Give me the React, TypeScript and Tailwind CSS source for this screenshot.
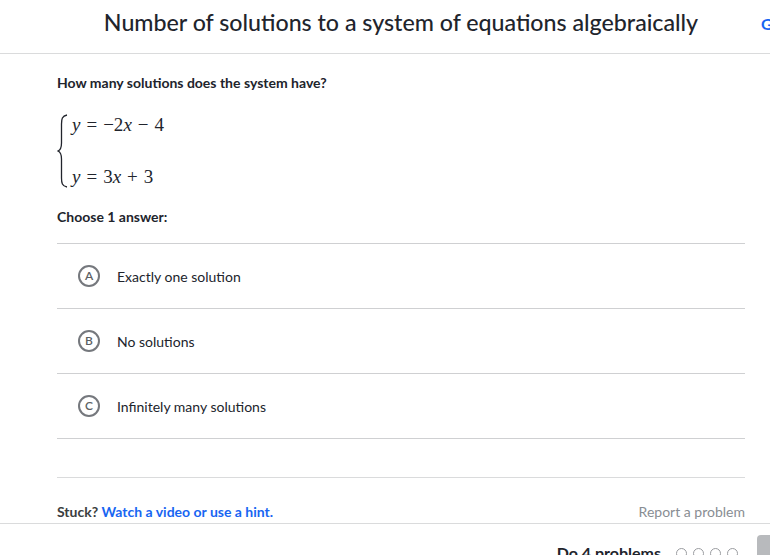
const lato = { fontFamily: 'Lato, "Noto Sans", sans-serif' }

const choices = [
  { letter: 'A', text: 'Exactly one solution' },
  { letter: 'B', text: 'No solutions' },
  { letter: 'C', text: 'Infinitely many solutions' },
]

function Brace() {
  return (
    <svg width="12" height="74" viewBox="0 0 12 74" className="shrink-0">
      <path
        d="M10 1 C5 2 4.5 5 4.5 10 L4.5 29 C4.5 34 3.5 36 1 37 C3.5 38 4.5 40 4.5 45 L4.5 64 C4.5 69 5 72 10 73"
        fill="none"
        stroke="#21242c"
        strokeWidth="1.3"
      />
    </svg>
  )
}

function Op({ children }: { children: React.ReactNode }) {
  return <span className="mx-[6px]">{children}</span>
}

function Letter({ letter }: { letter: string }) {
  return (
    <span className="relative flex h-[22px] w-[22px] shrink-0 items-center justify-center">
      <svg width="22" height="22" viewBox="0 0 22 22" className="absolute inset-0">
        <circle cx="11" cy="11" r="10" fill="none" stroke="#75787d" strokeWidth="2" />
      </svg>
      <span className="relative text-[12px] leading-none font-semibold text-[#5c5f63]">{letter}</span>
    </span>
  )
}

export default function App() {
  return (
    <div className="relative h-[555px] w-[770px] overflow-hidden bg-white text-[#21242c]" style={lato}>
      <header className="relative flex h-[54px] items-center justify-center border-b border-[#dadbdc] pl-[32px]">
        <h1 className="pb-[8px] text-[23.2px] font-medium">
          Number of solutions to a system of equations algebraically
        </h1>
        <span className="absolute left-[761px] top-[12px] text-[16px] font-bold text-[#1865f2]">G</span>
      </header>

      <main className="pl-[57px] pr-[25px] pt-[20px]">
        <p className="text-[14px] font-bold leading-[18px]">How many solutions does the system have?</p>

        <div className="mt-[22px] flex h-[74px] items-stretch gap-[3px]" style={{ fontFamily: '"Liberation Serif", serif' }}>
          <Brace />
          <div className="flex flex-col justify-between text-[19px] leading-[22px]">
            <span>
              <i>y</i>
              <Op>=</Op>−2<i>x</i>
              <Op>−</Op>4
            </span>
            <span>
              <i>y</i>
              <Op>=</Op>3<i>x</i>
              <Op>+</Op>3
            </span>
          </div>
        </div>

        <p className="mt-[20px] text-[14px] font-bold leading-[18px]">Choose 1 answer:</p>

        <ul className="mt-[17px] border-t border-[#cfd0d2]">
          {choices.map((c) => (
            <li key={c.letter} className="flex h-[65px] items-center border-b border-[#cfd0d2] pl-[21px]">
              <Letter letter={c.letter} />
              <span className="ml-[17px] text-[14px]">{c.text}</span>
            </li>
          ))}
        </ul>

        <div className="mt-[38px] border-t border-[#dadbdc]" />
      </main>

      <div className="flex h-[46px] items-center justify-between border-b border-[#dadbdc] pl-[57px] pr-[25px] pt-[21px] text-[14px]">
        <p className="font-bold text-[#3b3e40]">
          Stuck? <span className="text-[#1865f2]">Watch a video or use a hint.</span>
        </p>
        <span className="text-[#888d93]">Report a problem</span>
      </div>

      <div className="flex items-start justify-end pt-[11px]">
        <span className="mt-[6px] text-[16px] font-bold">Do 4 problems</span>
        <div className="ml-[15px] mt-[13px] flex gap-[6px]">
          {[0, 1, 2, 3].map((i) => (
            <span key={i} className="h-[11px] w-[11px] rounded-full border border-[#9a9ca0]" />
          ))}
        </div>
        <div className="-mr-[30px] ml-[19px] h-[40px] w-[43px] shrink-0 rounded-[4px] bg-[#b8babd]" />
      </div>
    </div>
  )
}
